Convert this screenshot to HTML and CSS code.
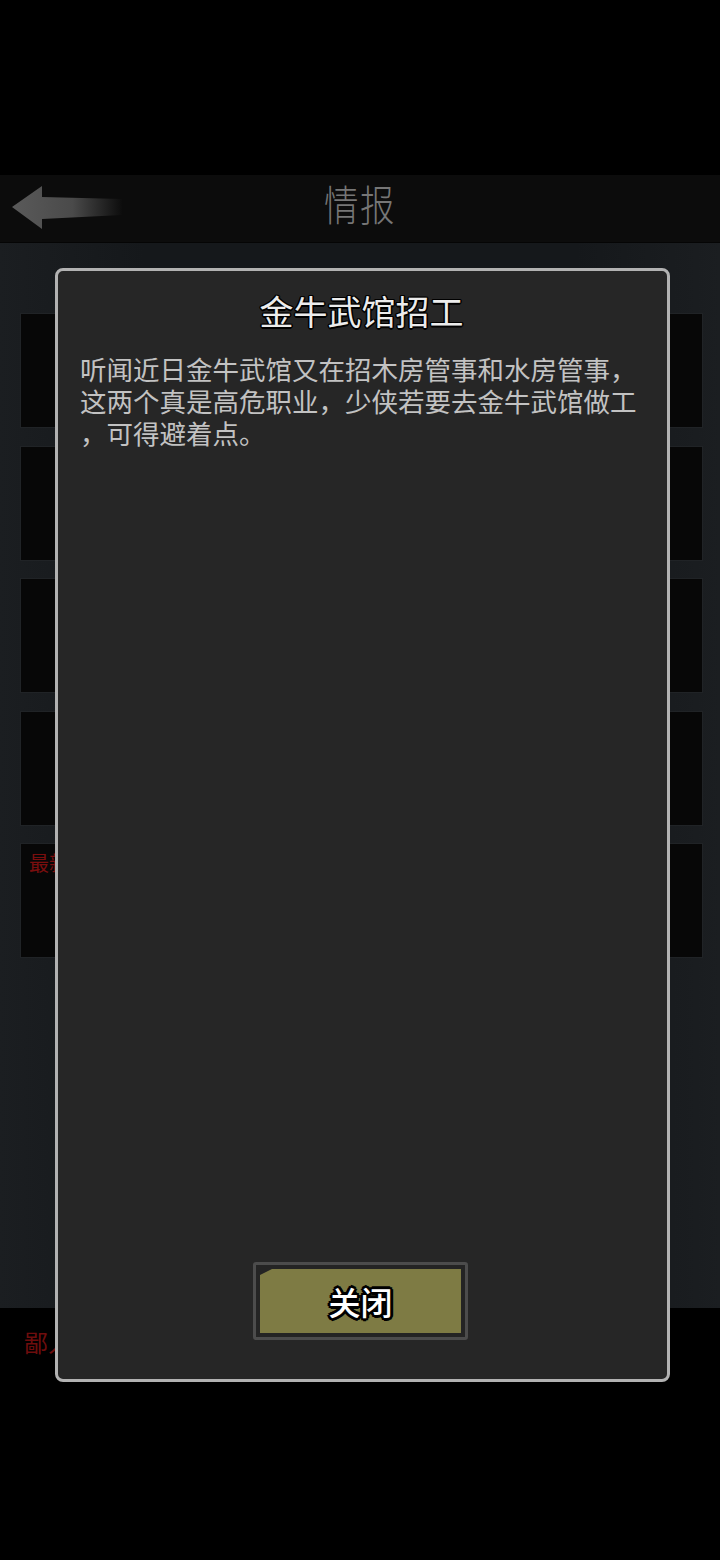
FILE: index.html
```html
<!DOCTYPE html>
<html lang="zh-CN">
<head>
<meta charset="utf-8">
<title>情报</title>
<link rel="stylesheet" href="styles.css">
</head>
<body>
<div class="screen">
  <div class="top-gap"></div>
  <header class="header">
    <div class="back">
      <svg width="110" height="46" viewBox="0 0 110 46">
        <defs>
          <linearGradient id="ag" x1="0" y1="0" x2="1" y2="0">
            <stop offset="0" stop-color="#5a5a5a"/>
            <stop offset="0.55" stop-color="#4a4a4a"/>
            <stop offset="1" stop-color="#0d0d0d"/>
          </linearGradient>
        </defs>
        <path d="M0 21 L30 0 L30 11 L110 13 L110 29 L30 33 L30 43 Z" fill="url(#ag)"/>
      </svg>
    </div>
    <h1 class="header-title">情报</h1>
  </header>
  <main class="content">
    <div class="card"></div>
    <div class="card"></div>
    <div class="card"></div>
    <div class="card"></div>
    <div class="card"><span class="red-text">最新消息</span></div>
  </main>
  <footer class="footer">
    <span class="red-text big">鄙人不才</span>
  </footer>

  <div class="modal">
    <h2 class="modal-title">金牛武馆招工</h2>
    <p class="modal-body">听闻近日金牛武馆又在招木房管事和水房管事，<br>这两个真是高危职业，少侠若要去金牛武馆做工<br>，可得避着点。</p>
    <div class="modal-actions">
      <button class="btn-close"><span class="btn-inner">关闭</span></button>
    </div>
  </div>
</div>
</body>
</html>
```
FILE: styles.css
```css
* { box-sizing: border-box; }
html, body {
  margin: 0;
  padding: 0;
  background: #000;
  width: 720px;
  height: 1560px;
  overflow: hidden;
  font-family: "Noto Sans CJK SC", "Noto Sans", sans-serif;
}
.screen {
  position: relative;
  width: 720px;
  height: 1560px;
  display: flex;
  flex-direction: column;
}
.top-gap { height: 175px; background: #000; }
.header {
  height: 68px;
  background: #0c0c0c;
  display: flex;
  align-items: center;
  justify-content: center;
  position: relative;
  border-bottom: 1px solid #050505;
  padding-bottom: 12px;
}
.back {
  position: absolute;
  left: 12px;
  top: 11px;
  width: 110px;
  height: 46px;
}
.back svg { display: block; }
.header-title {
  margin: 0;
  font-family: "Noto Sans CJK SC", serif;
  font-weight: 300;
  font-size: 42px;
  line-height: 1;
  color: #767676;
  letter-spacing: 2px;
  transform: scaleX(0.82);
}
.content {
  height: 1065px;
  background: linear-gradient(90deg, #1b1e21 0%, #15181b 20%, #15181b 80%, #1b1e21 100%);
  padding: 70px 17px 0 20px;
  display: flex;
  flex-direction: column;
  gap: 17.5px;
}
.card {
  height: 115px;
  background: #070707;
  border: 1px solid #202326;
  padding: 6px 8px;
}
.red-text {
  color: #7a0e0e;
  font-family: "Liberation Serif", "Noto Sans CJK SC", serif;
  font-size: 20px;
  line-height: 28px;
}
.footer {
  flex: 1;
  background: #000;
  padding: 22px 0 0 24px;
}
.red-text.big { font-size: 24px; color: #6e0d0d; }

.modal {
  position: absolute;
  left: 55px;
  top: 268px;
  width: 615px;
  height: 1114px;
  background: #262626;
  border: 3px solid #b2b2b2;
  border-radius: 8px;
  display: flex;
  flex-direction: column;
  padding: 18px 26px 39px 22px;
}
.modal-title {
  margin: 0;
  text-align: center;
  font-size: 34px;
  line-height: 44px;
  font-weight: 400;
  color: #ececec;
  padding-left: 2px;
  text-shadow: -1.5px 0 0 #000, 1.5px 0 0 #000, 0 -1.5px 0 #000, 0 1.5px 0 #000,
               -1px -1px 0 #000, 1px 1px 0 #000, -1px 1px 0 #000, 1px -1px 0 #000;
}
.modal-body {
  margin: 20px 0 0 0;
  font-size: 26.5px;
  line-height: 32px;
  color: #c2c2c2;
  white-space: nowrap;
}
.modal-actions {
  margin-top: auto;
  display: flex;
  justify-content: center;
}
.btn-close {
  width: 215px;
  height: 78px;
  padding: 4px;
  background: #242424;
  border: 3px solid #4c4c4c;
  border-radius: 3px;
  display: flex;
  cursor: pointer;
}
.btn-inner {
  flex: 1;
  background: #7e7b44;
  clip-path: polygon(12px 0, 100% 0, 100% 100%, 0 100%, 0 6px);
  display: flex;
  align-items: center;
  justify-content: center;
  font-family: "Noto Sans CJK SC", sans-serif;
  font-size: 32px;
  font-weight: 500;
  color: #fff;
  text-shadow: -2px 0 0 #000, 2px 0 0 #000, 0 -2px 0 #000, 0 2px 0 #000,
               -2px -2px 0 #000, 2px 2px 0 #000, -2px 2px 0 #000, 2px -2px 0 #000,
               -3px 0 0 #000, 3px 0 0 #000, 0 3px 0 #000, 0 -3px 0 #000;
}
```
